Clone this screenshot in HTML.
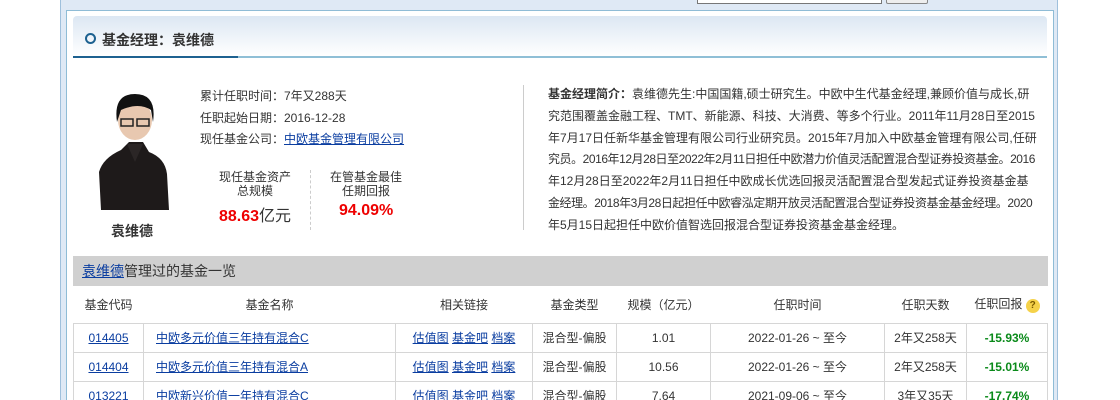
<!DOCTYPE html>
<html style="height:400px;overflow:hidden"><head><meta charset="utf-8"><style>
*{margin:0;padding:0;box-sizing:border-box}
body{width:1120px;height:400px;overflow:hidden;background:#fff;font-family:"Liberation Sans","Noto Sans CJK SC",sans-serif;font-size:12px;color:#333;position:relative}
.outer{position:absolute;left:60px;top:-2px;width:998px;height:420px;background:#dfe9f5;border:1px solid #9fc0dc}
.inner{position:absolute;left:66px;top:10px;width:988px;height:400px;background:#fff;border:1px solid #8fbcd6}
.hdr{position:absolute;left:73px;top:16px;width:974px;height:40px;background:linear-gradient(#dce7f3,#fff);border-radius:4px 4px 0 0}
.hdr .line{position:absolute;left:0;bottom:-2px;width:974px;height:2px;background:#8fbfd6}
.hdr .line b{position:absolute;left:0;top:0;width:165px;height:2px;background:#1d6190}
.hdr .t{position:absolute;left:29px;top:14px;font-size:14px;font-weight:bold;color:#333}
.hdr .c{position:absolute;left:12px;top:17px;width:11px;height:11px;border:2px solid #1d6190;border-radius:50%}
.abs{position:absolute;white-space:nowrap}
a{color:#0a3da0;text-decoration:underline}
.bar{position:absolute;left:73px;top:256px;width:975px;height:30px;background:#d0d0d0;font-size:14px;line-height:30px;padding-left:9px}
table{position:absolute;left:73px;top:286px;width:975px;border-collapse:collapse;font-size:12px}
td,th{border:1px solid #d6d6d6;text-align:center;height:29px;font-weight:normal}
th{height:37px;border-left:none;border-right:none;border-top:none}
.g{color:#0a8a1a;font-weight:bold}
.l{text-align:left;padding-left:12px}
.sq{letter-spacing:-0.45px}
</style></head><body>
<div class="outer"></div>
<div class="abs" style="left:697px;top:-4px;width:185px;height:8px;border:1px solid #777;background:#fff"></div>
<div class="abs" style="left:886px;top:-4px;width:42px;height:8px;border:1px solid #888;border-radius:2px;background:#eee"></div>
<div class="inner"></div>
<div class="hdr"><div class="c"></div><div class="t">基金经理：袁维德</div><div class="line"><b></b></div></div>
<svg class="abs" style="left:95px;top:92px" width="74" height="118" viewBox="0 0 74 118">
<path d="M6 118 L4 80 Q8 66 26 58 L34 50 L48 50 L54 60 Q70 66 72 82 L74 118Z" fill="#1e1a1a"/>
<path d="M32 52 L40 70 L48 52Z" fill="#2b2626"/>
<ellipse cx="40" cy="28" rx="17" ry="20" fill="#e8c8b0"/>
<path d="M22 30 Q18 2 40 2 Q62 2 58 30 L56 18 Q44 10 26 18Z" fill="#111"/>
<rect x="26" y="27" width="12" height="7" fill="none" stroke="#222" stroke-width="1.5"/><rect x="42" y="27" width="12" height="7" fill="none" stroke="#222" stroke-width="1.5"/>
</svg>
<div class="abs" style="left:111px;top:221px;font-size:14px;font-weight:bold">袁维德</div>
<div class="abs" style="left:200px;top:86px;line-height:21.5px">累计任职时间：7年又288天<br>任职起始日期：2016-12-28<br>现任基金公司：<a>中欧基金管理有限公司</a></div>
<div class="abs" style="left:219px;top:170px;line-height:14px;text-align:center">现任基金资产<br>总规模</div>
<div class="abs" style="left:219px;top:202px;font-size:16px"><b style="color:#e00">88.63</b>亿元</div>
<div class="abs" style="left:310px;top:170px;height:60px;border-left:1px dashed #ccc"></div>
<div class="abs" style="left:330px;top:170px;line-height:14px;text-align:center">在管基金最佳<br>任期回报</div>
<div class="abs" style="left:339px;top:202px;font-size:16px;font-weight:bold;color:#e00">94.09%</div>
<div class="abs" style="left:523px;top:85px;height:145px;border-left:1px solid #ccc"></div>
<div class="abs" style="left:548px;top:84px;line-height:21.8px"><b>基金经理简介：</b>袁维德先生:中国国籍,硕士研究生。中欧中生代基金经理,兼顾价值与成长,研<br>究范围覆盖金融工程、TMT、新能源、科技、大消费、等多个行业。2011年11月28日至2015<br>年7月17日任新华基金管理有限公司行业研究员。2015年7月加入中欧基金管理有限公司,任研<br><span class="sq">究员。2016年12月28日至2022年2月11日担任中欧潜力价值灵活配置混合型证券投资基金。2016</span><br>年12月28日至2022年2月11日担任中欧成长优选回报灵活配置混合型发起式证券投资基金基<br><span class="sq">金经理。2018年3月28日起担任中欧睿泓定期开放灵活配置混合型证券投资基金基金经理。2020</span><br>年5月15日起担任中欧价值智选回报混合型证券投资基金基金经理。</div>
<div class="bar"><a>袁维德</a>管理过的基金一览</div>
<table>
<tr><th style="width:70px">基金代码</th><th style="width:252px">基金名称</th><th style="width:137px">相关链接</th><th style="width:84px">基金类型</th><th style="width:94px">规模（亿元）</th><th style="width:174px">任职时间</th><th style="width:82px">任职天数</th><th>任职回报 <span style="display:inline-block;width:14px;height:14px;border-radius:50%;background:#f5d24a;color:#7a5a00;font-size:10px;line-height:14px;font-weight:bold">?</span></th></tr>
<tr><td><a>014405</a></td><td class="l"><a>中欧多元价值三年持有混合C</a></td><td><a>估值图</a> <a>基金吧</a> <a>档案</a></td><td>混合型-偏股</td><td>1.01</td><td>2022-01-26 ~ 至今</td><td>2年又258天</td><td class="g">-15.93%</td></tr>
<tr><td><a>014404</a></td><td class="l"><a>中欧多元价值三年持有混合A</a></td><td><a>估值图</a> <a>基金吧</a> <a>档案</a></td><td>混合型-偏股</td><td>10.56</td><td>2022-01-26 ~ 至今</td><td>2年又258天</td><td class="g">-15.01%</td></tr>
<tr><td><a>013221</a></td><td class="l"><a>中欧新兴价值一年持有混合C</a></td><td><a>估值图</a> <a>基金吧</a> <a>档案</a></td><td>混合型-偏股</td><td>7.64</td><td>2021-09-06 ~ 至今</td><td>3年又35天</td><td class="g">-17.74%</td></tr>
</table>
</body></html>
